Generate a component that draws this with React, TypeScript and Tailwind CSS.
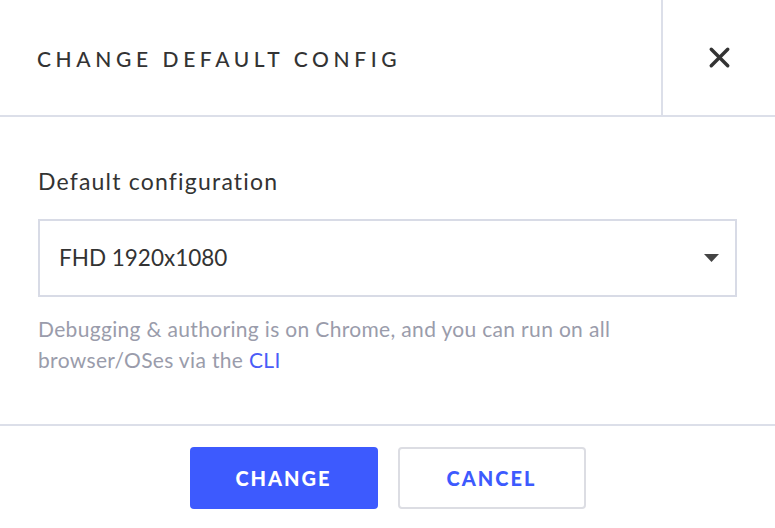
import { X } from 'lucide-react';

export default function App() {
  return (
    <div className="min-h-screen w-full bg-white font-['Lato','Noto_Sans',sans-serif] text-[#333]">
      {/* Header */}
      <div className="flex h-[117px] border-b-2 border-[#dcdfe9]">
        <div className="flex flex-1 items-center pl-[37px] pt-[2px]">
          <h1 className="text-[21px] font-medium uppercase tracking-[0.22em] text-[#333]">
            Change default config
          </h1>
        </div>
        <div className="flex w-[114px] items-center justify-center border-l-2 border-[#dcdfe9]">
          <X className="h-[33px] w-[33px] text-[#333]" strokeWidth={2.5} />
        </div>
      </div>

      {/* Body */}
      <div className="px-[38px] pt-[49px] pb-[49px]">
        <label className="block text-[23px] leading-[30px] tracking-[1.2px] text-[#333]">
          Default configuration
        </label>
        <div className="mt-[23px] flex h-[78px] items-center justify-between border-2 border-[#d8dbe6] pl-[19px] pr-[16px]">
          <span className="text-[22.5px] text-[#333]">FHD 1920x1080</span>
          <svg width="15" height="8" viewBox="0 0 15 8" className="text-[#444]">
            <path d="M0 0 H15 L7.5 8 Z" fill="currentColor" />
          </svg>
        </div>
        <p className="mt-[16px] text-[21px] leading-[31px] tracking-[0.33px] text-[#9a9cab]">
          Debugging &amp; authoring is on Chrome, and you can run on all
          <br />
          browser/OSes via the <span className="text-[#4a5cf7]">CLI</span>
        </p>
      </div>

      {/* Footer */}
      <div className="flex justify-center gap-[20px] border-t-2 border-[#dcdfe9] pt-[21px]">
        <button className="h-[62px] w-[188px] rounded-[4px] bg-[#3d5afe] text-[20px] font-black uppercase tracking-[0.1em] text-white">
          Change
        </button>
        <button className="h-[62px] w-[188px] rounded-[4px] border-2 border-[#dcdde3] bg-white text-[20px] font-black uppercase tracking-[0.1em] text-[#3d5afe]">
          Cancel
        </button>
      </div>
    </div>
  );
}
